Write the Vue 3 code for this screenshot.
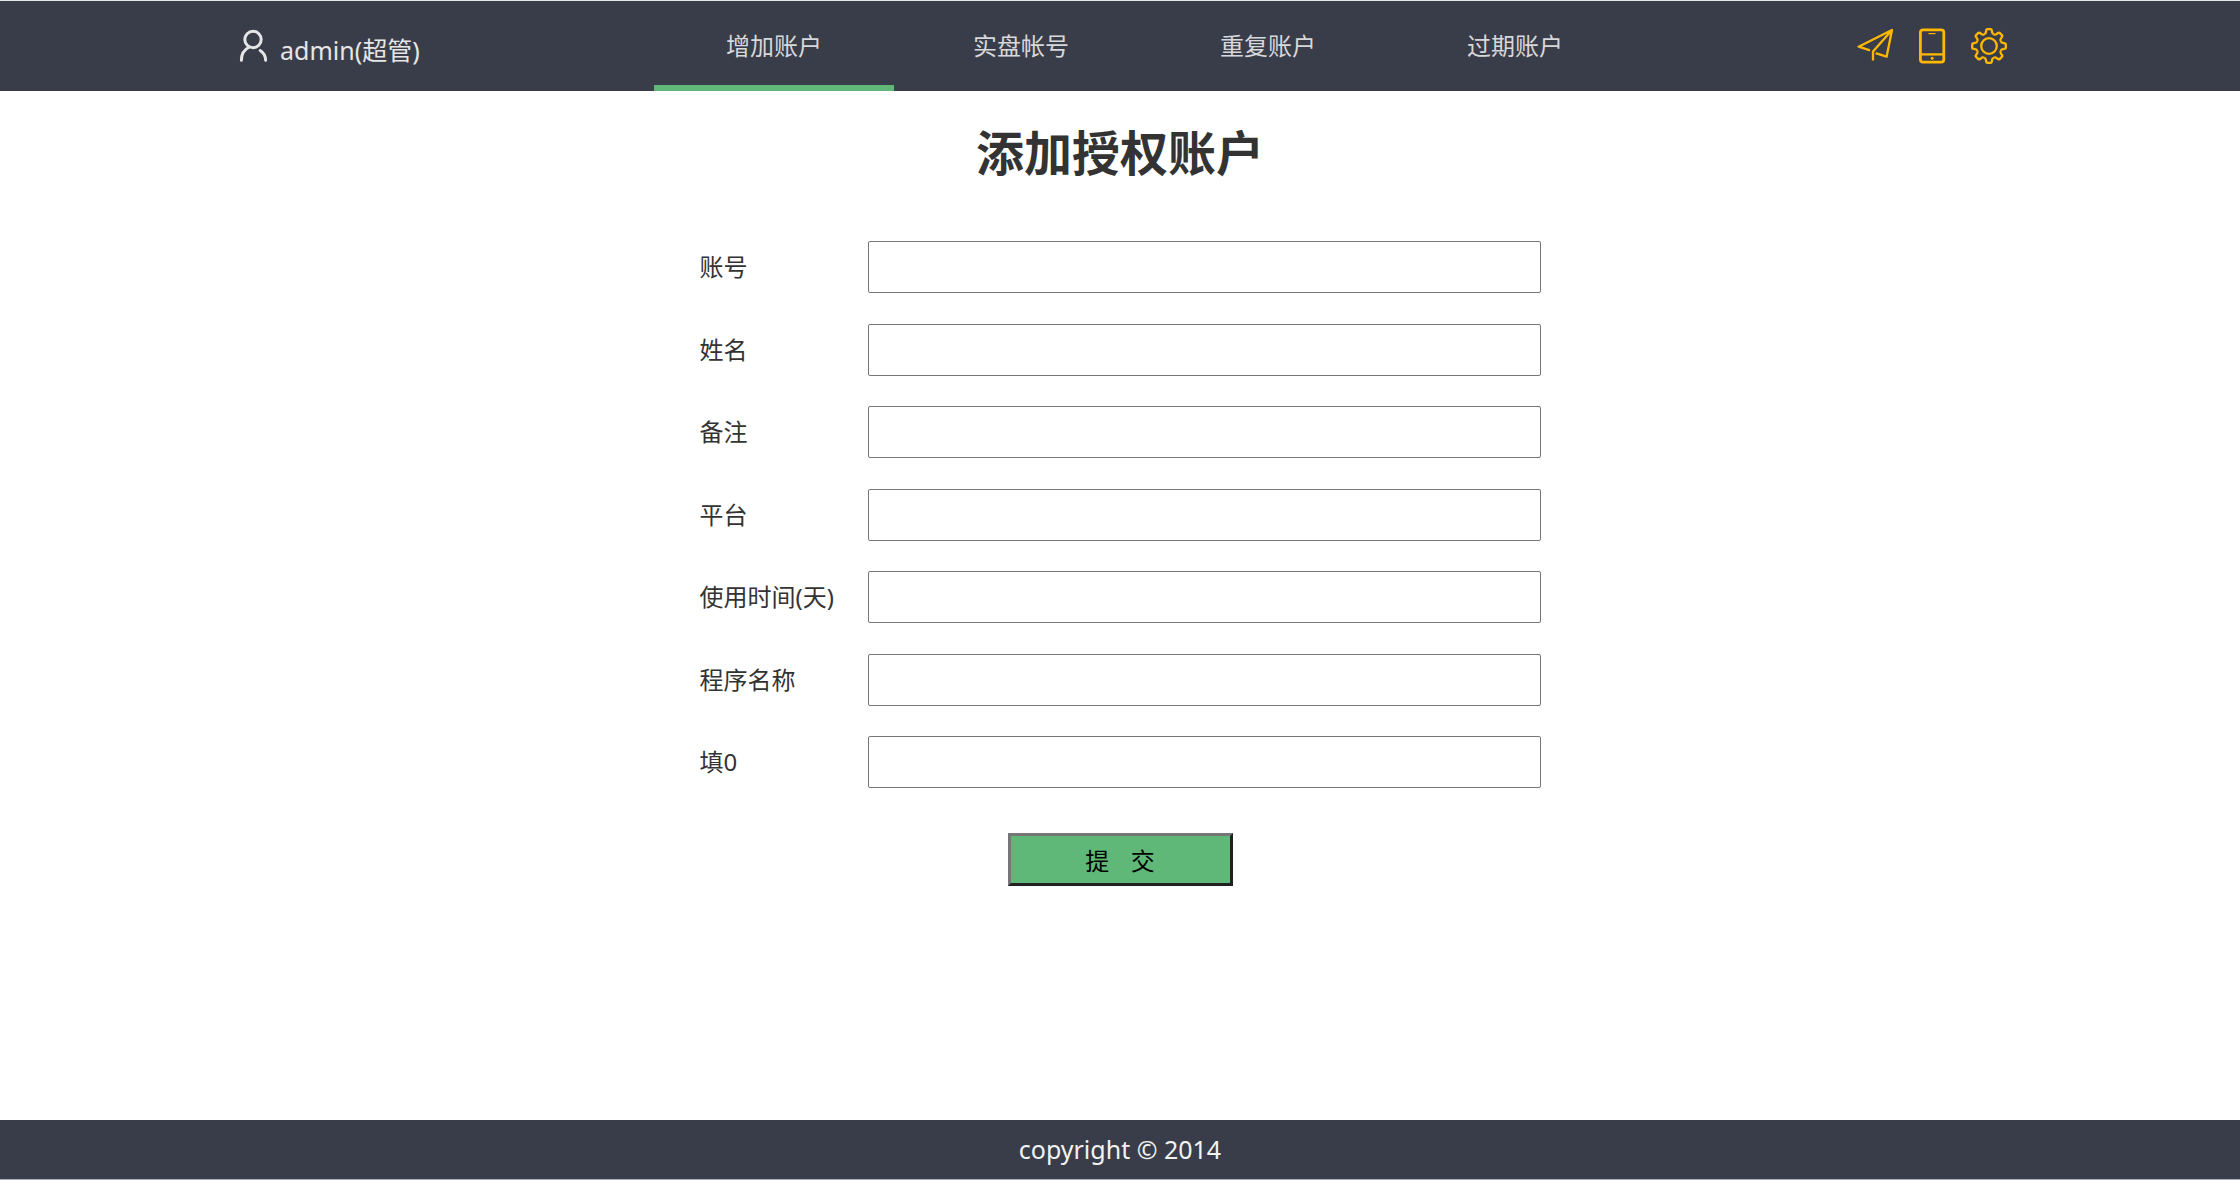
<script setup>
import { ref, reactive } from 'vue'

const tabs = ['增加账户', '实盘帐号', '重复账户', '过期账户']
const active = ref(0)

const fields = [
  { id: 'account', label: '账号' },
  { id: 'name', label: '姓名' },
  { id: 'remark', label: '备注' },
  { id: 'platform', label: '平台' },
  { id: 'days', label: '使用时间(天)' },
  { id: 'program', label: '程序名称' },
  { id: 'zero', label: '填0' },
]
const form = reactive(Object.fromEntries(fields.map((f) => [f.id, ''])))
</script>

<template>
  <div class="page">
    <header class="header">
      <div class="bar">
        <a class="user" href="#">
          <svg class="user-icon" viewBox="0 0 32 36" aria-hidden="true">
            <circle cx="15" cy="11.5" r="8.2" />
            <path d="M3.4 32.2C3.4 26 6.4 21.4 11.4 19" />
            <path d="M22.2 22.6C25.6 24.8 27.5 28 27.6 32.2" />
          </svg>
          <span>admin(超管)</span>
        </a>
        <nav class="tabs">
          <a
            v-for="(tab, i) in tabs"
            :key="tab"
            href="#"
            class="tab"
            :class="{ active: i === active }"
            @click.prevent="active = i"
          >{{ tab }}</a>
        </nav>
        <div class="actions">
          <button type="button" class="action" aria-label="发送">
            <svg viewBox="0 0 36 36" aria-hidden="true">
              <path d="M13 22.3L1.6 18.7L35 2L29.6 28.7L18.6 25.2M35 2L16 23.6V32.4" />
            </svg>
          </button>
          <button type="button" class="action" aria-label="手机">
            <svg viewBox="0 0 36 36" aria-hidden="true">
              <rect class="thick" x="6.4" y="1.8" width="23.4" height="32.4" rx="2.6" />
              <path d="M6 26.4H30" />
              <path class="thin" d="M14.5 5.6H21.5" />
              <circle class="dot" cx="18.2" cy="30.2" r="1.5" />
            </svg>
          </button>
          <button type="button" class="action" aria-label="设置">
            <svg viewBox="0 0 36 36" aria-hidden="true">
              <circle cx="18" cy="18" r="7.8" />
              <g transform="translate(18 18)">
                <path
                  v-for="n in 8"
                  :key="n"
                  :transform="`rotate(${n * 45})`"
                  d="M-4.9 -11.8Q-3.3 -12.2 -3.1 -13.8L-2.7 -16Q-2.5 -16.8 -1.7 -16.8H1.7Q2.5 -16.8 2.7 -16L3.1 -13.8Q3.3 -12.2 4.9 -11.8"
                />
              </g>
            </svg>
          </button>
        </div>
      </div>
    </header>

    <main class="main">
      <h1 class="title">添加授权账户</h1>
      <form class="form" @submit.prevent>
        <div class="fields">
          <div v-for="f in fields" :key="f.id" class="row">
            <label class="label" :for="f.id">{{ f.label }}</label>
            <input :id="f.id" v-model="form[f.id]" class="input" type="text" />
          </div>
        </div>
        <button class="submit" type="submit">提 &nbsp;&nbsp; 交</button>
      </form>
    </main>

    <footer class="footer">copyright © 2014</footer>
  </div>
</template>

<style>
body {
  margin: 0;
}
</style>

<style scoped>
.page {
  display: flex;
  flex-direction: column;
  min-height: 100vh;
  box-sizing: border-box;
  background: #fff;
  color: #333;
  font-family: "Noto Sans", "Noto Sans CJK SC", sans-serif;
  font-size: 24px;
  line-height: 36px;
}

.header {
  border-top: 1px solid #e2e8ea;
  background: #393d49;
}

.bar {
  display: flex;
  max-width: 1774px;
  height: 90px;
  margin: 0 auto;
}

.user {
  display: flex;
  align-items: center;
  gap: 10px;
  width: 421px;
  padding: 8px 0 0 5px;
  box-sizing: border-box;
  color: #e6e6e6;
  font-size: 25px;
  text-decoration: none;
}

.user-icon {
  width: 32px;
  height: 36px;
  margin-bottom: 8px;
  fill: none;
  stroke: #e6e6e6;
  stroke-width: 3;
  stroke-linecap: round;
}

.tabs {
  display: flex;
  gap: 7px;
}

.tab {
  width: 240px;
  box-sizing: border-box;
  border-bottom: 6px solid transparent;
  color: #d7d8db;
  line-height: 90px;
  text-align: center;
  text-decoration: none;
}

.tab.active {
  border-bottom-color: #5fb878;
}

.actions {
  display: flex;
  align-items: center;
  gap: 21px;
  margin-left: auto;
}

.action {
  width: 36px;
  height: 36px;
  padding: 0;
  border: 0;
  background: none;
}

.action svg {
  display: block;
  fill: none;
  stroke: #ffb800;
  stroke-width: 2.3;
  stroke-linejoin: round;
}

.action .thin {
  stroke-width: 1.2;
}

.action .thick {
  stroke-width: 2.8;
}

.action .dot {
  fill: #ffb800;
  stroke: none;
}

.main {
  flex: 1;
}

.title {
  margin: 26px 0 52px;
  font-size: 48px;
  line-height: 72px;
  text-align: center;
}

.form {
  display: flex;
  flex-direction: column;
  align-items: center;
  gap: 45px;
}

.fields {
  display: flex;
  flex-direction: column;
  justify-content: space-between;
  width: 841px;
  max-width: 100%;
  min-height: 547px;
}

.row {
  display: flex;
  align-items: center;
}

.label {
  width: 168px;
}

.input {
  flex: 1;
  height: 52px;
  box-sizing: border-box;
  padding: 0 12px;
  border: 1px solid #767676;
  border-radius: 2px;
  font: inherit;
}

.submit {
  width: 225px;
  height: 53px;
  padding: 0;
  border: 3px solid;
  border-color: #767676 #212121 #212121 #767676;
  background: #5fb878;
  color: #000;
  font-family: "Noto Sans CJK SC", sans-serif;
  font-size: 24px;
}

.footer {
  border-bottom: 1px solid #a9afbb;
  background: #393d49;
  color: #f2f2f2;
  font-size: 25px;
  line-height: 59px;
  text-align: center;
}
</style>
